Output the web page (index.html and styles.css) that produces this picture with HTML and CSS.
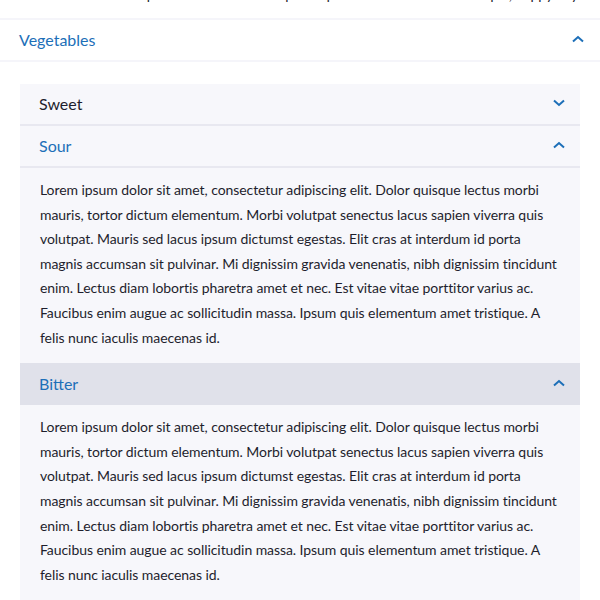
FILE: index.html
```html
<!DOCTYPE html>
<html>
<head>
<meta charset="utf-8">
<link rel="stylesheet" href="styles.css">
</head>
<body>
<div class="prev">
  <p class="prev-text">Lectus diam lobortis pharetra amet et nec. Ipsum quis elementum amet tristique, happy days.</p>
</div>
<section class="acc">
  <div class="acc-head open">
    <span>Vegetables</span>
    <svg class="chev" width="12" height="8" viewBox="0 0 12 8"><path d="M1 6.5 L6 2 L11 6.5" fill="none" stroke="currentColor" stroke-width="2"/></svg>
  </div>
  <div class="acc-body">
    <div class="panel">
      <div class="sub-head">
        <span>Sweet</span>
        <svg class="chev" width="12" height="8" viewBox="0 0 12 8"><path d="M1 1.5 L6 6 L11 1.5" fill="none" stroke="currentColor" stroke-width="2"/></svg>
      </div>
      <div class="sub-head open">
        <span>Sour</span>
        <svg class="chev" width="12" height="8" viewBox="0 0 12 8"><path d="M1 6.5 L6 2 L11 6.5" fill="none" stroke="currentColor" stroke-width="2"/></svg>
      </div>
      <div class="sub-body">
        <p>Lorem ipsum dolor sit amet, consectetur adipiscing elit. Dolor quisque lectus morbi mauris, tortor dictum elementum. Morbi volutpat senectus lacus sapien viverra quis volutpat. Mauris sed lacus ipsum dictumst egestas. Elit cras at interdum id porta magnis accumsan sit pulvinar. Mi dignissim gravida venenatis, nibh dignissim tincidunt enim. Lectus diam lobortis pharetra amet et nec. Est vitae vitae porttitor varius ac. Faucibus enim augue ac sollicitudin massa. Ipsum quis elementum amet tristique. A felis nunc iaculis maecenas id.</p>
      </div>
      <div class="sub-head open hover">
        <span>Bitter</span>
        <svg class="chev" width="12" height="8" viewBox="0 0 12 8"><path d="M1 6.5 L6 2 L11 6.5" fill="none" stroke="currentColor" stroke-width="2"/></svg>
      </div>
      <div class="sub-body">
        <p>Lorem ipsum dolor sit amet, consectetur adipiscing elit. Dolor quisque lectus morbi mauris, tortor dictum elementum. Morbi volutpat senectus lacus sapien viverra quis volutpat. Mauris sed lacus ipsum dictumst egestas. Elit cras at interdum id porta magnis accumsan sit pulvinar. Mi dignissim gravida venenatis, nibh dignissim tincidunt enim. Lectus diam lobortis pharetra amet et nec. Est vitae vitae porttitor varius ac. Faucibus enim augue ac sollicitudin massa. Ipsum quis elementum amet tristique. A felis nunc iaculis maecenas id.</p>
      </div>
    </div>
  </div>
</section>
</body>
</html>
```
FILE: styles.css
```css
* { box-sizing: border-box; }
html, body {
  margin: 0;
  padding: 0;
  background: #ffffff;
  font-family: Lato, "Open Sans", sans-serif;
  color: #1e1e2d;
  overflow: hidden;
}
.prev {
  height: 18px;
  overflow: hidden;
  padding: 0 20px;
}
.prev-text {
  margin: -17px 0 0 0;
  font-size: 14px;
  line-height: 24.5px;
  white-space: nowrap;
}
.acc {
  border-top: 2px solid #f5f5fa;
}
.acc-head {
  height: 42px;
  display: flex;
  align-items: center;
  justify-content: space-between;
  padding: 0 16px 2px 19px;
  font-size: 16px;
  color: #1d6fb8;
  border-bottom: 2px solid #f5f5fa;
}
.chev {
  display: block;
  color: #1d6fb8;
}
.acc-body {
  padding: 22px 20px 0 20px;
}
.panel {
  background: #f7f7fb;
}
.sub-head {
  height: 42px;
  display: flex;
  align-items: center;
  justify-content: space-between;
  padding: 0 15px 2px 19px;
  font-size: 16px;
  color: #1e1e2d;
  border-bottom: 2px solid #e8e8f0;
}
.sub-head.open { color: #1d6fb8; }
.sub-head.hover {
  background: #e0e1ea;
  border-bottom-color: #e0e1ea;
  height: 42px;
  padding-top: 2px;
}
.sub-body {
  padding: 10px 20px 13px 20px;
}
.sub-body p {
  margin: 0;
  font-size: 14px;
  line-height: 24.6px;
  letter-spacing: -0.07px;
  color: #1e1e2d;
}
```
